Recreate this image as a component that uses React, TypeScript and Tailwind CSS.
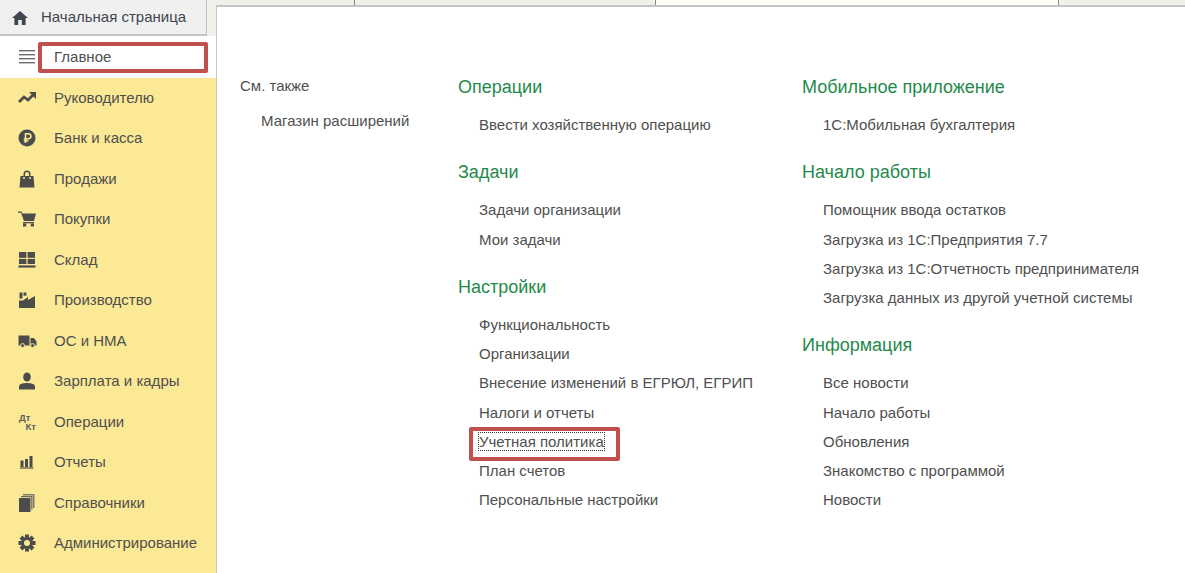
import React from "react";

const c = "#4c4c4c";
const y = "#fbe995";

const Home = () => (
  <svg width="18" height="16" viewBox="0 0 18 16"><path d="M9 1 L17 8 L14.6 8 L14.6 15 L10.8 15 L10.8 10 L7.2 10 L7.2 15 L3.4 15 L3.4 8 L1 8 Z" fill="#3f4650" /></svg>
);
const Burger = () => (
  <svg width="16" height="16" viewBox="0 0 16 16" fill="#6b6b6b"><rect y="1" width="16" height="1.4" /><rect y="5" width="16" height="1.4" /><rect y="9" width="16" height="1.4" /><rect y="13" width="16" height="1.4" /></svg>
);
const Trend = () => (
  <svg width="18" height="18" viewBox="0 0 18 18" fill="none" stroke={c} strokeWidth="2.8"><path d="M1 13 L6 8 L10 11 L15 6" /><path d="M11 3 L18 3 L18 10 Z" fill={c} stroke="none" /></svg>
);
const Rub = () => (
  <svg width="18" height="18" viewBox="0 0 18 18"><circle cx="9" cy="9" r="8.5" fill={c} /><path d="M7.5 14 V4.8 H10.4 A2.5 2.5 0 0 1 10.4 9.8 H5.8 M5.8 11.8 H10.4" fill="none" stroke={y} strokeWidth="1.5" /></svg>
);
const Bag = () => (
  <svg width="18" height="18" viewBox="0 0 18 18"><path d="M2.5 6 H5.5 V4 A3.5 3.5 0 0 1 12.5 4 V6 H15.5 L16.5 17.5 H1.5 Z" fill={c} /><path d="M7 6 V4 A2 2 0 0 1 11 4 V6 Z" fill={y} /><circle cx="6" cy="8" r="1" fill={y} /><circle cx="12" cy="8" r="1" fill={y} /></svg>
);
const Cart = () => (
  <svg width="18" height="18" viewBox="0 0 18 18"><path d="M0 1.5 H3.5 L4.2 3.5 H18 L16 11 H6 L3 2.8 H0 Z" fill={c} /><rect x="5" y="12" width="11" height="1.3" fill={c} /><rect x="5" y="13.5" width="3.2" height="3" fill={c} /><rect x="12.8" y="13.5" width="3.2" height="3" fill={c} /></svg>
);
const Store = () => (
  <svg width="18" height="18" viewBox="0 0 18 18" fill={c}><rect x="1" y="1" width="7.4" height="5.8" /><rect x="9.6" y="1" width="7.4" height="5.8" /><rect x="1" y="7.9" width="7.4" height="5.1" /><rect x="9.6" y="7.9" width="7.4" height="5.1" /><rect x="0.5" y="14.4" width="17" height="2.2" /></svg>
);
const Factory = () => (
  <svg width="18" height="18" viewBox="0 0 18 18" fill={c}><path d="M1 17 V9.5 L5 9.5 L10 6 V9 L17 5 V17 Z" /><rect x="1.5" y="1.5" width="3" height="6" /><rect x="5.5" y="1.5" width="3" height="3.2" /></svg>
);
const Truck = () => (
  <svg width="19" height="18" viewBox="0 0 19 18"><path d="M0.5 3.5 H11.5 V13.5 H0.5 Z M12.5 6 H16 L18.5 9.5 V13.5 H12.5 Z" fill={c} /><circle cx="4.5" cy="13.6" r="2" fill={c} stroke={y} /><circle cx="14.5" cy="13.6" r="2" fill={c} stroke={y} /></svg>
);
const Person = () => (
  <svg width="18" height="18" viewBox="0 0 18 18" fill={c}><ellipse cx="9" cy="5" rx="3.8" ry="4.6" /><path d="M1 17.5 V14.5 C1 11.5 6 11 9 11 C12 11 17 11.5 17 14.5 V17.5 Z" /></svg>
);
const Bars = () => (
  <svg width="18" height="18" viewBox="0 0 18 18" fill={c}><rect x="2.5" y="7.5" width="3" height="6.5" /><rect x="7" y="6" width="3" height="8" /><rect x="11.5" y="3" width="3" height="11" /><rect x="2" y="14.4" width="13.5" height="1.2" /></svg>
);
const Books = () => (
  <svg width="18" height="20" viewBox="0 0 18 20"><path d="M5 1 H16.5 V15 H15 V2.5 H5 Z" fill="#7a7a70" /><path d="M3 3 H14.5 V16.5 H13.2 V4.3 H3 Z" fill="#6a6a64" /><rect x="1" y="5" width="11.5" height="14" fill={c} /></svg>
);
const Gear = () => (
  <svg width="18" height="18" viewBox="0 0 18 18"><g fill={c}>{[0, 45, 90, 135].map((r) => (<rect key={r} x="7" y="0.5" width="4" height="17" transform={`rotate(${r} 9 9)`} />))}<circle cx="9" cy="9" r="6" /></g><circle cx="9" cy="9" r="3" fill={y} /></svg>
);
const DtKt = () => (
  <span className="ml-px flex h-[18px] w-[17px] flex-col text-[9.5px] font-bold leading-[9px] text-[#5f5f5f]">
    <span>Дт</span>
    <span className="self-end">Кт</span>
  </span>
);

const nav: [string, React.ReactNode][] = [
  ["Руководителю", <Trend />],
  ["Банк и касса", <Rub />],
  ["Продажи", <Bag />],
  ["Покупки", <Cart />],
  ["Склад", <Store />],
  ["Производство", <Factory />],
  ["ОС и НМА", <Truck />],
  ["Зарплата и кадры", <Person />],
  ["Операции", <DtKt />],
  ["Отчеты", <Bars />],
  ["Справочники", <Books />],
  ["Администрирование", <Gear />],
];

function Section({ title, items }: { title: string; items: React.ReactNode[] }) {
  return (
    <section className="mb-[21px]">
      <h2 className="mb-[11px] h-6 text-[18px] font-normal leading-6 text-[#1f8a4c]">{title}</h2>
      <ul>
        {items.map((t, i) => (
          <li key={i} className="h-[29.25px] pl-[21px] text-[15px] leading-[29.25px] text-[#4f4f4f]">{t}</li>
        ))}
      </ul>
    </section>
  );
}

export default function App() {
  return (
    <div className="relative flex h-[573px] w-[1185px] overflow-hidden bg-white font-['Liberation_Sans',Arial,sans-serif]">
      <aside className="flex w-[216px] shrink-0 flex-col bg-[#fbe995]">
        <div className="h-9 bg-[#f1f0ea]">
          <div className="flex h-9 w-[207px] items-center gap-3 border-r border-b-2 border-[#c4c4c4] bg-[#f0f0f0] pl-[11px] pt-px text-[15px] text-[#3f4650]">
            <Home />
            <span>Начальная страница</span>
          </div>
        </div>
        <div className="flex h-[41.5px] items-center bg-white pl-[19px] text-[15px] text-[#4f4f4f]">
          <Burger />
          <span className="ml-[19px]">Главное</span>
        </div>
        <nav className="flex flex-col">
          {nav.map(([t, icon]) => (
            <div key={t} className="flex h-[40.5px] items-center text-[15px] text-[#4f4f4f]">
              <span className="flex w-[54px] justify-start pl-[18px]">{icon}</span>
              <span>{t}</span>
            </div>
          ))}
        </nav>
      </aside>
      <div className="flex min-w-0 flex-1 flex-col bg-[#f1f0ea]">
        <div className="flex h-[5px] shrink-0">
          <div className="w-[139px] border-r border-[#8a8a8a]" />
          <div className="w-[301px] border-r border-[#8a8a8a]" />
          <div className="w-[403px] border-r border-[#8a8a8a] bg-[#fffff6]" />
          <div className="flex-1" />
        </div>
        <main className="flex flex-1 border-l border-t-2 border-[#c4c4c4] bg-white pl-[23px] pt-[67px]">
          <div className="w-[218px] text-[15px] text-[#4f4f4f]">
            <div className="flex h-6 items-center">См. также</div>
            <div className="mt-[9px] flex h-[29.25px] items-center pl-[21px]">Магазин расширений</div>
          </div>
          <div className="w-[344px] pt-px">
            <Section title="Операции" items={["Ввести хозяйственную операцию"]} />
            <Section title="Задачи" items={["Задачи организации", "Мои задачи"]} />
            <Section
              title="Настройки"
              items={[
                "Функциональность",
                "Организации",
                "Внесение изменений в ЕГРЮЛ, ЕГРИП",
                "Налоги и отчеты",
                <span className="outline-1 outline-dotted outline-[#333]">Учетная политика</span>,
                "План счетов",
                "Персональные настройки",
              ]}
            />
          </div>
          <div className="flex-1 pt-px">
            <Section title="Мобильное приложение" items={["1С:Мобильная бухгалтерия"]} />
            <Section
              title="Начало работы"
              items={[
                "Помощник ввода остатков",
                "Загрузка из 1С:Предприятия 7.7",
                "Загрузка из 1С:Отчетность предпринимателя",
                "Загрузка данных из другой учетной системы",
              ]}
            />
            <Section
              title="Информация"
              items={["Все новости", "Начало работы", "Обновления", "Знакомство с программой", "Новости"]}
            />
          </div>
        </main>
      </div>
      <div className="absolute left-[38px] top-[42px] h-[31px] w-[170px] rounded-[2px] border-[4px] border-[#c0504d]" />
      <div className="absolute left-[469px] top-[427px] h-[34px] w-[151px] rounded-[2px] border-[4px] border-[#c0504d]" />
    </div>
  );
}
